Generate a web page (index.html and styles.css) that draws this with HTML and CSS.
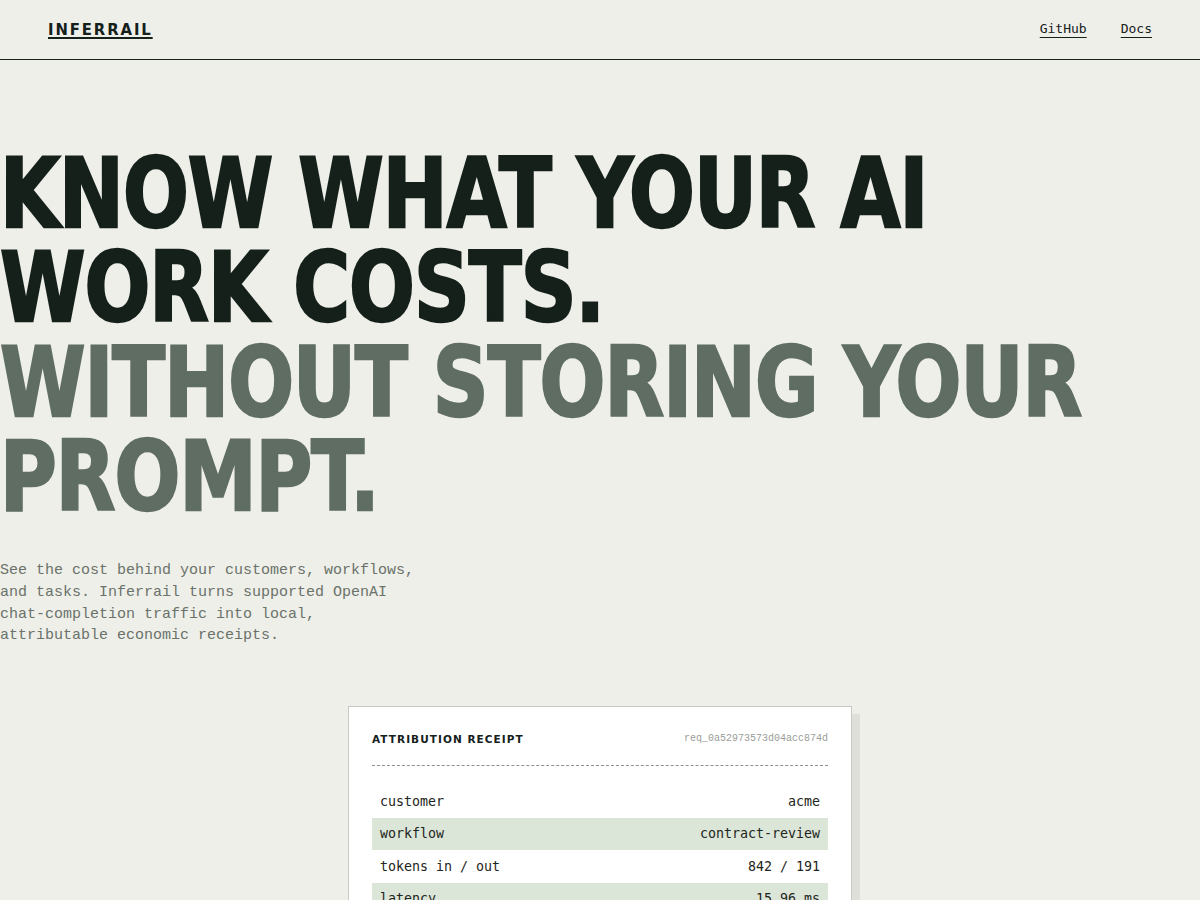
FILE: index.html
```html
<!DOCTYPE html>
<html lang="en">
<head>
<meta charset="utf-8">
<title>Inferrail</title>
<link rel="stylesheet" href="styles.css">
</head>
<body>
<header class="topbar">
  <a class="logo" href="#">INFERRAIL</a>
  <nav class="nav">
    <a href="#">GitHub</a>
    <a href="#">Docs</a>
  </nav>
</header>
<main class="hero">
  <h1 class="headline">
    <span class="dark">KNOW WHAT YOUR AI<br>WORK COSTS.</span>
    <span class="muted">WITHOUT STORING YOUR<br>PROMPT.</span>
  </h1>
  <p class="lede">See the cost behind your customers, workflows, and tasks. Inferrail turns supported OpenAI chat-completion traffic into local, attributable economic receipts.</p>
  <section class="receipt">
    <div class="receipt-head">
      <span class="receipt-title">ATTRIBUTION RECEIPT</span>
      <span class="receipt-id">req_0a52973573d04acc874d</span>
    </div>
    <div class="rows">
      <div class="row"><span>customer</span><span>acme</span></div>
      <div class="row alt"><span>workflow</span><span>contract-review</span></div>
      <div class="row"><span>tokens in / out</span><span>842 / 191</span></div>
      <div class="row alt"><span>latency</span><span>15.96 ms</span></div>
      <div class="row"><span>cost</span><span>$0.0041</span></div>
    </div>
  </section>
</main>
</body>
</html>
```

FILE: styles.css
```css
* { box-sizing: border-box; }
html, body { margin: 0; padding: 0; }
body {
  background: #eeefe9;
  color: #15201b;
  font-family: "DejaVu Sans Mono", monospace;
  overflow: hidden;
}
a { color: inherit; }

.topbar {
  height: 60px;
  border-bottom: 1px solid #1a231e;
  display: flex;
  align-items: center;
  justify-content: space-between;
  padding: 0 48px;
}
.logo {
  font-family: "DejaVu Sans Condensed", "DejaVu Sans", sans-serif;
  font-stretch: condensed;
  font-weight: 700;
  font-size: 16.5px;
  letter-spacing: 1.9px;
  text-decoration: underline;
  text-decoration-thickness: 2px;
  text-underline-offset: 2px;
  margin-top: -1px;
}
.nav {
  display: flex;
  gap: 34px;
  font-size: 13px;
  margin-top: -3px;
}
.nav a {
  text-decoration: underline;
  text-decoration-thickness: 1px;
  text-underline-offset: 4px;
}

.hero {
  padding-top: 87px;
}
.headline {
  margin: 0;
  font-family: "DejaVu Sans Condensed", "DejaVu Sans", sans-serif;
  font-stretch: condensed;
  font-weight: 700;
  font-size: 96px;
  line-height: 94.3px;
  letter-spacing: -1px;
  -webkit-text-stroke: 2.4px currentColor;
  transform: scaleX(0.896);
  transform-origin: left top;
  white-space: nowrap;
}
.headline span { display: block; }
.dark { color: #15201b; }
.muted { color: #5f6d62; }

.lede {
  margin: 36px 0 0 0;
  max-width: 422px;
  font-family: "Liberation Mono", monospace;
  font-size: 15px;
  line-height: 21.7px;
  color: #6b7269;
}

.receipt {
  width: 504px;
  margin: 59px auto 0;
  background: #fff;
  border: 1px solid #c7c9c4;
  box-shadow: 8px 8px 0 #dedfd9;
  padding: 23px 23px 23px;
}
.receipt-head {
  display: flex;
  justify-content: space-between;
  align-items: center;
  height: 36px;
  padding-bottom: 18px;
  border-bottom: 1px dashed #8d918b;
}
.receipt-title {
  font-family: "DejaVu Sans", sans-serif;
  font-weight: 700;
  font-size: 10.5px;
  letter-spacing: 1.05px;
}
.receipt-id {
  font-family: "Liberation Mono", monospace;
  font-size: 10px;
  color: #9a9d98;
}
.rows { padding-top: 19px; }
.row {
  display: flex;
  justify-content: space-between;
  height: 32.5px;
  align-items: center;
  padding: 0 8px;
  font-size: 13.3px;
  color: #1d2520;
}
.row.alt { background: #dce6d8; }
```
